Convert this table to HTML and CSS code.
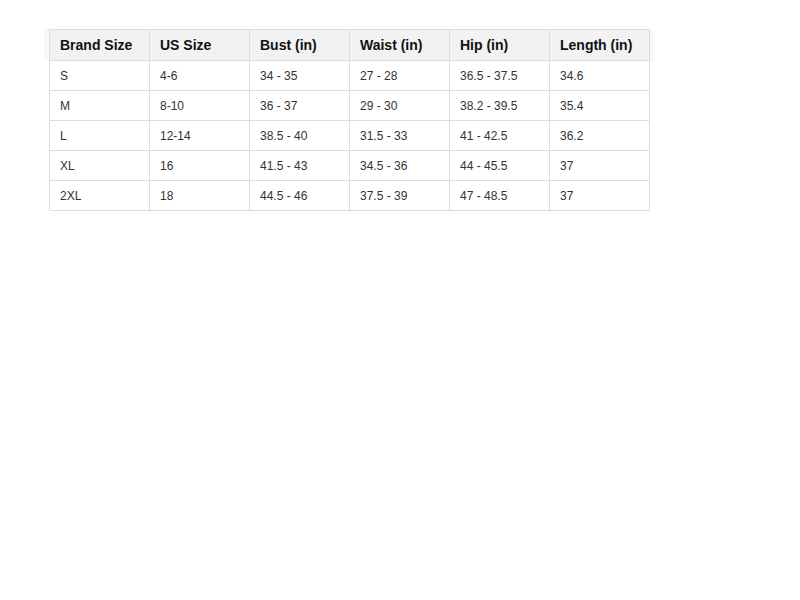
FILE: index.html
```html
<!DOCTYPE html>
<html>
<head>
<meta charset="utf-8">
<link rel="stylesheet" href="styles.css">
</head>
<body>
<div class="wrap">
<table class="size-table">
<thead>
<tr><th>Brand Size</th><th>US Size</th><th>Bust (in)</th><th>Waist (in)</th><th>Hip (in)</th><th>Length (in)</th></tr>
</thead>
<tbody>
<tr><td>S</td><td>4-6</td><td>34 - 35</td><td>27 - 28</td><td>36.5 - 37.5</td><td>34.6</td></tr>
<tr><td>M</td><td>8-10</td><td>36 - 37</td><td>29 - 30</td><td>38.2 - 39.5</td><td>35.4</td></tr>
<tr><td>L</td><td>12-14</td><td>38.5 - 40</td><td>31.5 - 33</td><td>41 - 42.5</td><td>36.2</td></tr>
<tr><td>XL</td><td>16</td><td>41.5 - 43</td><td>34.5 - 36</td><td>44 - 45.5</td><td>37</td></tr>
<tr><td>2XL</td><td>18</td><td>44.5 - 46</td><td>37.5 - 39</td><td>47 - 48.5</td><td>37</td></tr>
</tbody>
</table>
</div>
</body>
</html>
```
FILE: styles.css
```css
html, body {
  margin: 0;
  padding: 0;
  background: #fff;
  font-family: "Liberation Sans", Arial, sans-serif;
}
.wrap {
  padding: 29px 0 0 49px;
}
.size-table {
  border-collapse: collapse;
  table-layout: fixed;
}
.size-table th,
.size-table td {
  width: 79px;
  height: 29px;
  padding: 0 10px;
  border: 1px solid #ddd;
  text-align: left;
  vertical-align: middle;
  box-sizing: content-box;
}
.size-table th {
  height: 30px;
  background: #f2f2f2;
  font-size: 14px;
  font-weight: bold;
  color: #111;
  position: relative;
}
.size-table th:first-child::before,
.size-table th:last-child::after {
  content: "";
  position: absolute;
  top: 0;
  bottom: -1px;
  width: 5px;
  background: #f7f7f7;
}
.size-table th:first-child::before {
  left: -6px;
}
.size-table th:last-child::after {
  right: -6px;
}
.size-table td {
  font-size: 12px;
  color: #333;
}
```
